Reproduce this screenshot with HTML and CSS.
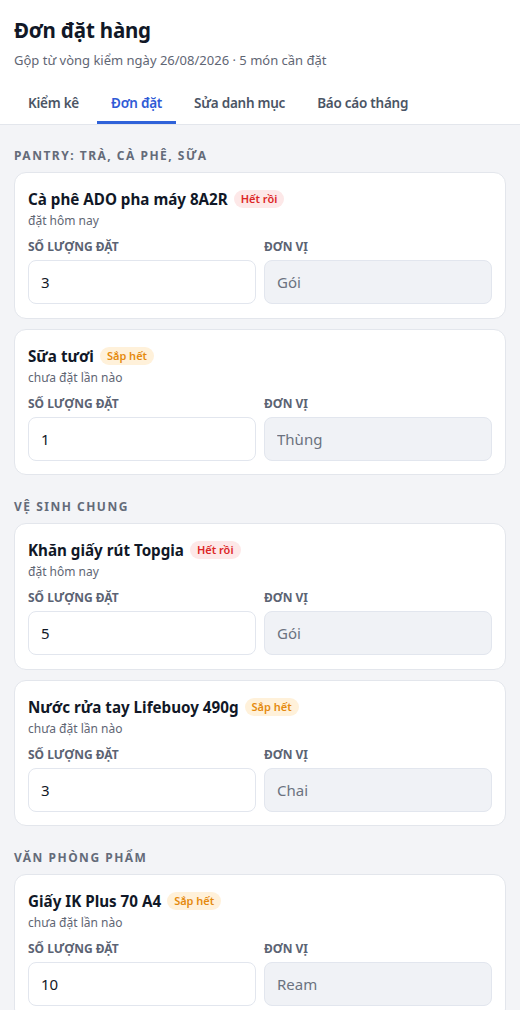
FILE: index.html
```html
<!DOCTYPE html>
<html lang="vi">
<head>
<meta charset="utf-8">
<title>Đơn đặt hàng</title>
<link rel="stylesheet" href="styles.css">
</head>
<body>
<header class="header">
  <h1 class="title">Đơn đặt hàng</h1>
  <p class="subtitle">Gộp từ vòng kiểm ngày 26/08/2026 · 5 món cần đặt</p>
  <nav class="tabs">
    <a class="tab">Kiểm kê</a>
    <a class="tab active">Đơn đặt</a>
    <a class="tab">Sửa danh mục</a>
    <a class="tab">Báo cáo tháng</a>
  </nav>
</header>
<main class="main">
  <section class="section">
    <h2 class="section-title">Pantry: Trà, cà phê, sữa</h2>
    <div class="card">
      <div class="item-head"><span class="item-name">Cà phê ADO pha máy 8A2R</span><span class="badge out">Hết rồi</span></div>
      <div class="item-meta">đặt hôm nay</div>
      <div class="fields">
        <label class="field"><span class="label">Số lượng đặt</span><input class="input" value="3"></label>
        <label class="field"><span class="label">Đơn vị</span><input class="input unit" value="Gói" readonly></label>
      </div>
    </div>
    <div class="card">
      <div class="item-head"><span class="item-name">Sữa tươi</span><span class="badge low">Sắp hết</span></div>
      <div class="item-meta">chưa đặt lần nào</div>
      <div class="fields">
        <label class="field"><span class="label">Số lượng đặt</span><input class="input" value="1"></label>
        <label class="field"><span class="label">Đơn vị</span><input class="input unit" value="Thùng" readonly></label>
      </div>
    </div>
  </section>
  <section class="section">
    <h2 class="section-title">Vệ sinh chung</h2>
    <div class="card">
      <div class="item-head"><span class="item-name">Khăn giấy rút Topgia</span><span class="badge out">Hết rồi</span></div>
      <div class="item-meta">đặt hôm nay</div>
      <div class="fields">
        <label class="field"><span class="label">Số lượng đặt</span><input class="input" value="5"></label>
        <label class="field"><span class="label">Đơn vị</span><input class="input unit" value="Gói" readonly></label>
      </div>
    </div>
    <div class="card">
      <div class="item-head"><span class="item-name">Nước rửa tay Lifebuoy 490g</span><span class="badge low">Sắp hết</span></div>
      <div class="item-meta">chưa đặt lần nào</div>
      <div class="fields">
        <label class="field"><span class="label">Số lượng đặt</span><input class="input" value="3"></label>
        <label class="field"><span class="label">Đơn vị</span><input class="input unit" value="Chai" readonly></label>
      </div>
    </div>
  </section>
  <section class="section">
    <h2 class="section-title">Văn phòng phẩm</h2>
    <div class="card">
      <div class="item-head"><span class="item-name">Giấy IK Plus 70 A4</span><span class="badge low">Sắp hết</span></div>
      <div class="item-meta">chưa đặt lần nào</div>
      <div class="fields">
        <label class="field"><span class="label">Số lượng đặt</span><input class="input" value="10"></label>
        <label class="field"><span class="label">Đơn vị</span><input class="input unit" value="Ream" readonly></label>
      </div>
    </div>
  </section>
</main>
</body>
</html>
```
FILE: styles.css
```css
* { box-sizing: border-box; }
html, body { margin: 0; padding: 0; }
body {
  font-family: "Noto Sans", "Open Sans", sans-serif;
  background: #f3f4f7;
  color: #111827;
}
.header {
  background: #fff;
  border-bottom: 1px solid #e3e6ec;
  padding: 16px 14px 0;
}
.title {
  margin: 0;
  font-size: 20.5px;
  line-height: 28px;
  font-weight: 700;
  letter-spacing: -0.2px;
  color: #111827;
}
.subtitle {
  margin: 6px 0 0;
  font-size: 13px;
  line-height: 20px;
  color: #5f6674;
}
.tabs {
  display: flex;
  gap: 4px;
  margin-top: 12px;
}
.tab {
  padding: 11px 14px 8px;
  font-size: 13.5px;
  line-height: 20px;
  font-weight: 600;
  letter-spacing: -0.25px;
  color: #4b5565;
  border-bottom: 3px solid transparent;
  cursor: pointer;
}
.tab.active {
  color: #2f5bd6;
  border-bottom-color: #2f62d9;
}
.main {
  padding: 23px 14px 20px;
}
.section + .section { margin-top: 24px; }
.section-title {
  margin: 0 0 8px;
  font-size: 12px;
  line-height: 16px;
  font-weight: 700;
  letter-spacing: 1.5px;
  text-transform: uppercase;
  color: #646b79;
}
.card {
  background: #fff;
  border: 1px solid #e3e6ec;
  border-radius: 12px;
  padding: 16px 13px 13.5px;
}
.card + .card { margin-top: 10px; }
.item-head {
  display: flex;
  align-items: center;
  gap: 6px;
  min-height: 20px;
}
.item-name {
  font-size: 15.2px;
  line-height: 20px;
  font-weight: 700;
  color: #111827;
}
.badge {
  font-size: 11px;
  line-height: 18px;
  font-weight: 600;
  padding: 0 7px;
  border-radius: 9px;
}
.badge.out { color: #dc2626; background: #fde8e8; }
.badge.low { color: #e58a0e; background: #fff1da; }
.item-meta {
  margin-top: 3px;
  font-size: 12px;
  line-height: 18px;
  color: #5f6674;
}
.fields {
  display: grid;
  grid-template-columns: 1fr 1fr;
  gap: 8px;
  margin-top: 9px;
}
.field {
  display: flex;
  flex-direction: column;
  gap: 5px;
}
.label {
  font-size: 12px;
  line-height: 16px;
  font-weight: 700;
  text-transform: uppercase;
  color: #5b6373;
}
.input {
  height: 44px;
  width: 100%;
  border: 1px solid #e2e6ee;
  border-radius: 8px;
  padding: 0 12px;
  font-family: inherit;
  font-size: 15px;
  color: #111827;
  background: #fff;
  outline: none;
}
.input.unit {
  background: #f0f2f6;
  color: #6b7280;
}
```
